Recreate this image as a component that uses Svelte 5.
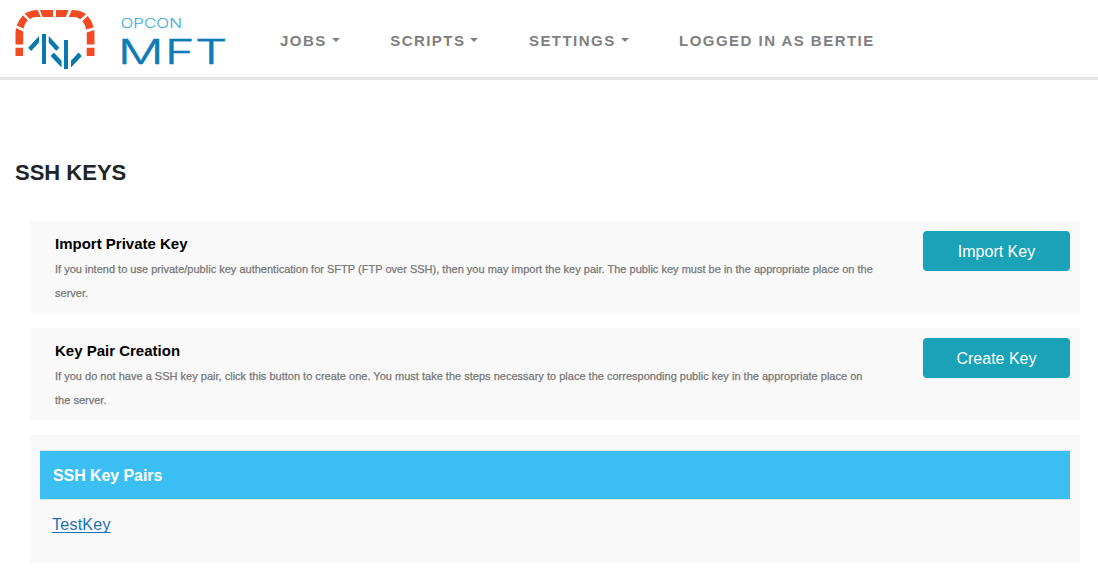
<script>
  const menu = [
    { label: 'JOBS', dropdown: true },
    { label: 'SCRIPTS', dropdown: true },
    { label: 'SETTINGS', dropdown: true },
    { label: 'LOGGED IN AS BERTIE', dropdown: false }
  ];
  const cards = [
    {
      title: 'Import Private Key',
      text: 'If you intend to use private/public key authentication for SFTP (FTP over SSH), then you may import the key pair. The public key must be in the appropriate place on the server.',
      action: 'Import Key'
    },
    {
      title: 'Key Pair Creation',
      text: 'If you do not have a SSH key pair, click this button to create one. You must take the steps necessary to place the corresponding public key in the appropriate place on the server.',
      action: 'Create Key'
    }
  ];
  const keys = ['TestKey'];
</script>

<header>
  <svg class="logo" width="240" height="76" viewBox="0 0 240 76" role="img" aria-label="OpCon MFT">
    <g fill="#f04b25">
      <path d="M15.500 47.700H23V56h-7.500zM86.700 47.700h7.800V56h-7.800z" />
      <path d="M15.500 44.500V33.500q0-3 .7-5.500l7.300 3.700q-.3 1.200-.3 3v9.800zM94.500 44.500V33.500q0-2-.4-3.500l-7.500 2.600q.2 1 .2 2.400v9.500z" />
      <path d="M16.700 25.600Q18.700 20 23 15.300l4.800 4.900q-3 2.900-4.200 8.300zM93.700 27.300Q92 20.500 87.800 16l-5.500 5.200q2.900 3 3.900 8.200z" />
      <path d="M24.700 13.800Q30 10 37.700 10l3 7h-4.500q-3.500 0-6.300 2zM86 14.200Q80.500 10 71.700 10l-2.900 7h4.400q4.300 0 7.100 2.300z" />
      <path d="M39.900 10H53v7H42.600zM56 10h12.700l-3 7H56z" />
    </g>
    <g fill="#0878b0">
      <path d="M42 34h4v30h-4zM64 40h4v29h-4z" />
      <path d="M39 36v6.600l-7.800 8.400-3-3.300zM48.700 36v6.600l7.500 8.400 3.200-3.300zM50.600 56l3.200-3.400 7.700 8.200v6.700zM71 67.500v-6.700l7.600-8.200 3.200 3.400z" />
    </g>
    <text class="brand-small" x="120.500" y="27.500" textLength="61.500" lengthAdjust="spacingAndGlyphs">OPCON</text>
    <text class="brand-big" transform="translate(117.800 63.500) scale(1.480 1)" x="0 31.800 52.200" y="0">MFT</text>
  </svg>
  <nav>
    {#each menu as item}
      <span class="item">{item.label}{#if item.dropdown}<i class="caret"></i>{/if}</span>
    {/each}
  </nav>
</header>

<main>
  <h1>SSH KEYS</h1>
  <div class="panels">
    {#each cards as card}
      <section class="card">
        <div class="copy">
          <h2>{card.title}</h2>
          <p>{card.text}</p>
        </div>
        <button>{card.action}</button>
      </section>
    {/each}
    <section class="pairs">
      <h3>SSH Key Pairs</h3>
      {#each keys as key}
        <a href="#key">{key}</a>
      {/each}
    </section>
  </div>
</main>

<style>
  :global(body) {
    background: #fff;
    font-family: "Liberation Sans", Arial, sans-serif;
    overflow: hidden;
  }
  header {
    display: flex;
    box-sizing: border-box;
    height: 80px;
    border-bottom: 3px solid #e4e4e4;
  }
  .logo {
    flex: none;
    display: block;
  }
  .brand-small {
    font: 300 12.500px Inter, sans-serif;
    fill: #35a7dc;
  }
  .brand-big {
    font: 300 34.500px Inter, sans-serif;
    fill: #0e7bb6;
    stroke: #0e7bb6;
    stroke-width: 0.400px;
  }
  nav {
    display: flex;
    gap: 50.500px;
    padding: 32px 0 0 40px;
  }
  .item {
    display: flex;
    height: 18px;
    font-size: 15px;
    line-height: 18px;
    font-weight: bold;
    letter-spacing: 1.460px;
    color: #808080;
    white-space: nowrap;
  }
  .caret {
    margin: 6px 0 0 5px;
    width: 0;
    height: 0;
    border: 4.500px solid transparent;
    border-top-color: #808080;
    border-bottom: 0;
  }
  main {
    padding: 81px 18px 0 15px;
  }
  h1 {
    margin: 0 0 36px;
    font-size: 22px;
    line-height: 24px;
    color: #212529;
  }
  .panels {
    display: flex;
    flex-direction: column;
    gap: 15px;
    margin-left: 15px;
  }
  .card {
    display: flex;
    justify-content: space-between;
    align-items: flex-start;
    box-sizing: border-box;
    height: 92px;
    padding: 10px 10px 0 25px;
    background: #f9f9f9;
  }
  .copy {
    width: 821px;
  }
  h2 {
    margin: 0;
    font-size: 15px;
    line-height: 26px;
    color: #000;
  }
  p {
    margin: 0;
    font-size: 11px;
    line-height: 24px;
    letter-spacing: 0.009px;
    color: #777;
    -webkit-text-stroke: 0.250px #777;
  }
  button {
    width: 147px;
    height: 40px;
    padding: 2px 0 0;
    border: 0;
    border-radius: 4px;
    background: #19a2b8;
    color: #fff;
    font: 16px "Liberation Sans", Arial, sans-serif;
  }
  .pairs {
    box-sizing: border-box;
    height: 128px;
    padding: 15px 10px 0;
    background: #f9f9f9;
  }
  h3 {
    margin: 0 0 12px;
    padding: 1px 0 0 13px;
    border-top: 1px solid #dee2e6;
    border-bottom: 1px solid #dee2e6;
    background: #3bbff3;
    color: #fff;
    font-size: 16px;
    letter-spacing: -0.080px;
    line-height: 47px;
  }
  a {
    display: block;
    width: max-content;
    margin-left: 12px;
    font-size: 16px;
    letter-spacing: 0.250px;
    line-height: 26px;
    color: #1a73b5;
    text-underline-offset: 2px;
    text-decoration-skip-ink: none;
  }
</style>
